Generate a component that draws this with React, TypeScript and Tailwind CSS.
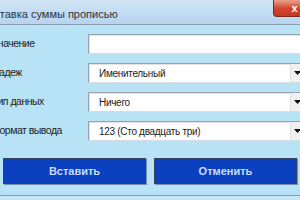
import React from "react";

function Arrow() {
  return (
    <svg width="7" height="4" viewBox="0 0 7 4">
      <path d="M0 0 H7 L3.5 4 Z" fill="#111" />
    </svg>
  );
}

function Field({ value, select }: { value?: string; select?: boolean }) {
  return (
    <div className="h-[20px] flex bg-white border border-[#9aa3ad] border-b-[#d9dde2] border-r-[#d9dde2] shadow-[inset_1px_1px_0_#e3e3e3]">
      <div className="flex-1 flex items-center pl-[10px] text-[10px] tracking-[-0.3px] text-[#1b1b1b] whitespace-nowrap overflow-hidden">
        {value}
      </div>
      {select && (
        <div className="w-[17px] flex items-center pl-[3px] bg-[#f0f0f0] border-l border-[#e2e2e2]">
          <Arrow />
        </div>
      )}
    </div>
  );
}

export default function App() {
  const rows: { label: string; value?: string; select?: boolean }[] = [
    { label: "Значение" },
    { label: "Падеж", value: "Именительный", select: true },
    { label: "Тип данных", value: "Ничего", select: true },
    { label: "Формат вывода", value: "123 (Сто двадцать три)", select: true },
  ];
  return (
    <div className="w-[300px] h-[200px] overflow-hidden bg-[#b8e3f7] flex flex-col" style={{ fontFamily: '"Liberation Sans", Arial, sans-serif' }}>
      <div className="h-[24px] shrink-0 flex bg-gradient-to-b from-[#d4e6f6] via-[#c2dcf2] to-[#b7d5ef]">
        <div className="-ml-[13px] pt-[6px] text-[11px] text-[#2a3542] whitespace-nowrap">Вставка суммы прописью</div>
        <div className="ml-auto -mr-[16px] w-[43px] h-[17px] rounded-b-[4px] bg-gradient-to-b from-[#e8a08c] via-[#d2462d] to-[#c33a22] border border-[#7a2a1e] border-t-0 flex items-center justify-center text-white text-[11px] font-bold leading-none">
          x
        </div>
      </div>
      <div className="h-px shrink-0 bg-[#8c9cad]" />
      <div className="-ml-[8px] -mr-[8px] pt-[9px] flex flex-col gap-[9px]">
        {rows.map((r) => (
          <div key={r.label} className="grid grid-cols-[96px_1fr] items-center">
            <div className="text-[10.5px] tracking-[-0.5px] text-[#222] whitespace-nowrap">{r.label}</div>
            <Field value={r.value} select={r.select} />
          </div>
        ))}
      </div>
      <div className="mt-[17px] px-[3px] grid grid-cols-2 gap-[8px]">
        <div className="h-[26px] bg-[#0b41bf] border border-[#33415f] shadow-[1px_1px_0_#7c8fa8] flex items-center justify-center text-[11px] font-bold text-[#c9dcff]">
          Вставить
        </div>
        <div className="h-[26px] bg-[#0b41bf] border border-[#33415f] shadow-[1px_1px_0_#7c8fa8] flex items-center justify-center text-[11px] font-bold text-[#c9dcff]">
          Отменить
        </div>
      </div>
      <div className="mt-auto h-[5px] border-t border-[#8f9aa6] bg-[#c7e6f4]" />
    </div>
  );
}
